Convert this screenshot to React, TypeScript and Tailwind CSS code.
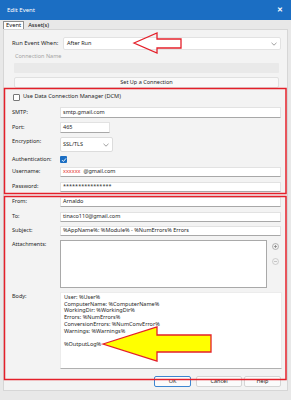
import React from "react";

const font = { fontFamily: '"Noto Sans", "Open Sans", Arial, sans-serif' };

function Chevron({ className }: { className?: string }) {
  return (
    <svg className={className} width="6" height="4" viewBox="0 0 6 4">
      <path d="M0.5 0.8 L3 3.2 L5.5 0.8" fill="none" stroke="#777" strokeWidth="0.7" />
    </svg>
  );
}

function Label({ children, className = "" }: { children: React.ReactNode; className?: string }) {
  return <div className={"w-[48px] shrink-0 text-[#262626] " + className}>{children}</div>;
}

function Input({ children, className = "" }: { children?: React.ReactNode; className?: string }) {
  return (
    <div
      className={
        "bg-white border border-[#e2e2e2] border-b-[#a8a8a8] rounded-[1px] flex items-center pl-[2px] text-[#262626] " +
        className
      }
    >
      {children}
    </div>
  );
}

export default function App() {
  return (
    <div className="w-[291px] h-[400px] bg-[#e8e8e8] relative overflow-hidden text-[5.5px] leading-none" style={font}>
      {/* title bar */}
      <div className="h-[20px] bg-[#1b6ec3] flex items-center justify-between pl-[7px] pr-[8px] text-white">
        <span className="text-[6px]">Edit Event</span>
        <span className="text-[6.5px] font-bold">✕</span>
      </div>
      {/* tabs */}
      <div className="h-[9px] flex items-end pl-[3px] gap-[3px]">
        <div className="h-[8px] px-[2px] bg-white border border-[#8f8f8f] border-b-0 flex items-center text-[#111] text-[5.8px]">Event</div>
        <div className="h-[7px] px-[1px] flex items-center text-[#111] text-[5.8px]">Asset(s)</div>
      </div>
      {/* panel */}
      <div className="mx-[3px] h-[362px] bg-[#f3f3f3] border border-[#d6d6d6] flex flex-col">
        {/* Run event when */}
        <div className="mt-[7px] h-[13px] flex items-center pl-[8px]">
          <div className="w-[51px] shrink-0 text-[5.8px] text-[#262626] whitespace-nowrap">Run Event When:</div>
          <div className="w-[218px] h-full bg-white border border-[#e2e2e2] rounded-[2px] flex items-center justify-between pl-[3px] pr-[3px] text-[#262626]">
            <span>After Run</span>
            <Chevron />
          </div>
        </div>
        <div className="mt-[3px] h-[8px] flex items-center pl-[11px] text-[#a3a3a3]">Connection Name</div>
        <div className="mt-[2px] ml-[10px] w-[265px] h-[10px] bg-[#e9e9e9] rounded-[1px]" />
        <div className="mt-[4px] ml-[10px] w-[265px] h-[11px] bg-[#f9f9f9] border border-[#e0e0e0] rounded-[2px] flex items-center justify-center text-[#262626]">
          Set Up a Connection
        </div>
        {/* DCM group */}
        <div className="mt-[5px] h-[8px] flex items-center pl-[9px] gap-[3px] text-[#262626]">
          <div className="w-[7px] h-[7px] border border-[#777] rounded-[1px] bg-white" />
          <span className="text-[5.6px]">Use Data Connection Manager (DCM)</span>
        </div>
        <div className="mt-[6px] h-[11px] flex items-center pl-[8px]">
          <Label>SMTP:</Label>
          <Input className="w-[221px] h-full">smtp.gmail.com</Input>
        </div>
        <div className="mt-[4px] h-[11px] flex items-center pl-[8px]">
          <Label>Port:</Label>
          <Input className="w-[50px] h-full">465</Input>
        </div>
        <div className="mt-[4px] h-[15px] flex items-start pl-[8px]">
          <Label className="pt-[2px]">Encryption:</Label>
          <div className="w-[53px] h-full bg-white border border-[#dcdcdc] rounded-[2px] flex items-center justify-between pl-[2px] pr-[3px] text-[#262626]">
            <span>SSL/TLS</span>
            <Chevron />
          </div>
        </div>
        <div className="mt-[4px] h-[7px] flex items-center pl-[8px]">
          <Label>Authentication:</Label>
          <div className="w-[7px] h-[7px] bg-[#1b6ec3] rounded-[1px] flex items-center justify-center">
            <svg width="6" height="6" viewBox="0 0 6 6">
              <path d="M1 3.1 L2.4 4.5 L5 1.4" fill="none" stroke="white" strokeWidth="0.9" />
            </svg>
          </div>
        </div>
        <div className="mt-[4px] h-[10px] flex items-center pl-[8px]">
          <Label>Username:</Label>
          <Input className="w-[221px] h-full">
            <span className="text-[#e31b1b]">xxxxxx</span>
            <span className="ml-[3px]">@gmail.com</span>
          </Input>
        </div>
        <div className="mt-[5px] h-[10px] flex items-center pl-[8px]">
          <Label>Password:</Label>
          <Input className="w-[221px] h-full">****************</Input>
        </div>
        {/* mail group */}
        <div className="mt-[5px] h-[10px] flex items-center pl-[8px]">
          <Label>From:</Label>
          <Input className="w-[221px] h-full">Arnaldo</Input>
        </div>
        <div className="mt-[5px] h-[10px] flex items-center pl-[8px]">
          <Label>To:</Label>
          <Input className="w-[221px] h-full">tinaco110@gmail.com</Input>
        </div>
        <div className="mt-[4px] h-[10px] flex items-center pl-[8px]">
          <Label>Subject:</Label>
          <Input className="w-[221px] h-full">%AppName%: %Module% - %NumErrors% Errors</Input>
        </div>
        <div className="mt-[4px] h-[48px] flex items-start pl-[8px]">
          <Label className="pt-[2px]">Attachments:</Label>
          <div className="w-[207px] h-full bg-white border border-[#a9a9a9]" />
          <div className="ml-[5px] flex flex-col gap-[8px] pt-[3px]">
            <svg width="7" height="7" viewBox="0 0 7 7">
              <circle cx="3.5" cy="3.5" r="3" fill="none" stroke="#8a8a8a" strokeWidth="0.6" />
              <path d="M3.5 1.9 V5.1 M1.9 3.5 H5.1" stroke="#6a6a6a" strokeWidth="0.6" />
            </svg>
            <svg width="7" height="7" viewBox="0 0 7 7">
              <circle cx="3.5" cy="3.5" r="3" fill="none" stroke="#b5b5b5" strokeWidth="0.6" />
              <path d="M1.9 3.5 H5.1" stroke="#a5a5a5" strokeWidth="0.6" />
            </svg>
          </div>
        </div>
        <div className="mt-[4px] h-[77px] flex items-start pl-[8px]">
          <Label className="pt-[2px]">Body:</Label>
          <div className="w-[222px] h-full bg-white border border-[#ececec] border-b-[#b0b0b0] pl-[3px] pt-[1px] text-[#262626] leading-[6.7px] text-[5.5px]">
            <div>User: %User%</div>
            <div>ComputerName: %ComputerName%</div>
            <div>WorkingDir: %WorkingDir%</div>
            <div>Errors: %NumErrors%</div>
            <div>ConversionErrors: %NumConvError%</div>
            <div>Warnings: %Warnings%</div>
            <div>&nbsp;</div>
            <div>%OutputLog%</div>
          </div>
        </div>
        {/* buttons */}
        <div className="mt-[7px] h-[11px] flex items-center pl-[150px] text-[#262626]">
          <div className="w-[37px] h-full bg-[#fbfbfb] border border-[#3d86d1] rounded-[2px] flex items-center justify-center">OK</div>
          <div className="ml-[5px] w-[46px] h-full bg-[#fbfbfb] border border-[#d5d5d5] rounded-[2px] flex items-center justify-center">Cancel</div>
          <div className="ml-[2px] w-[37px] h-full bg-[#fbfbfb] border border-[#d5d5d5] rounded-[2px] flex items-center justify-center">Help</div>
        </div>
      </div>
      {/* annotation overlay */}
      <svg className="absolute left-0 top-0 pointer-events-none" width="291" height="400" viewBox="0 0 291 400">
        <rect x="4.5" y="88.5" width="281.5" height="105" fill="none" stroke="#e4202a" strokeWidth="1.5" />
        <rect x="4.5" y="196.5" width="281.5" height="183" fill="none" stroke="#e4202a" strokeWidth="1.5" />
        <polygon
          points="134,43 157,33 157,39 181,39 181,48 157,48 157,53"
          fill="none"
          stroke="#e4202a"
          strokeWidth="1.3"
          strokeLinejoin="miter"
        />
        <polygon
          points="103,344 157,327 157,335 211,335 211,352 157,352 157,361"
          fill="#ffff00"
          stroke="#e4202a"
          strokeWidth="1.3"
        />
      </svg>
    </div>
  );
}
